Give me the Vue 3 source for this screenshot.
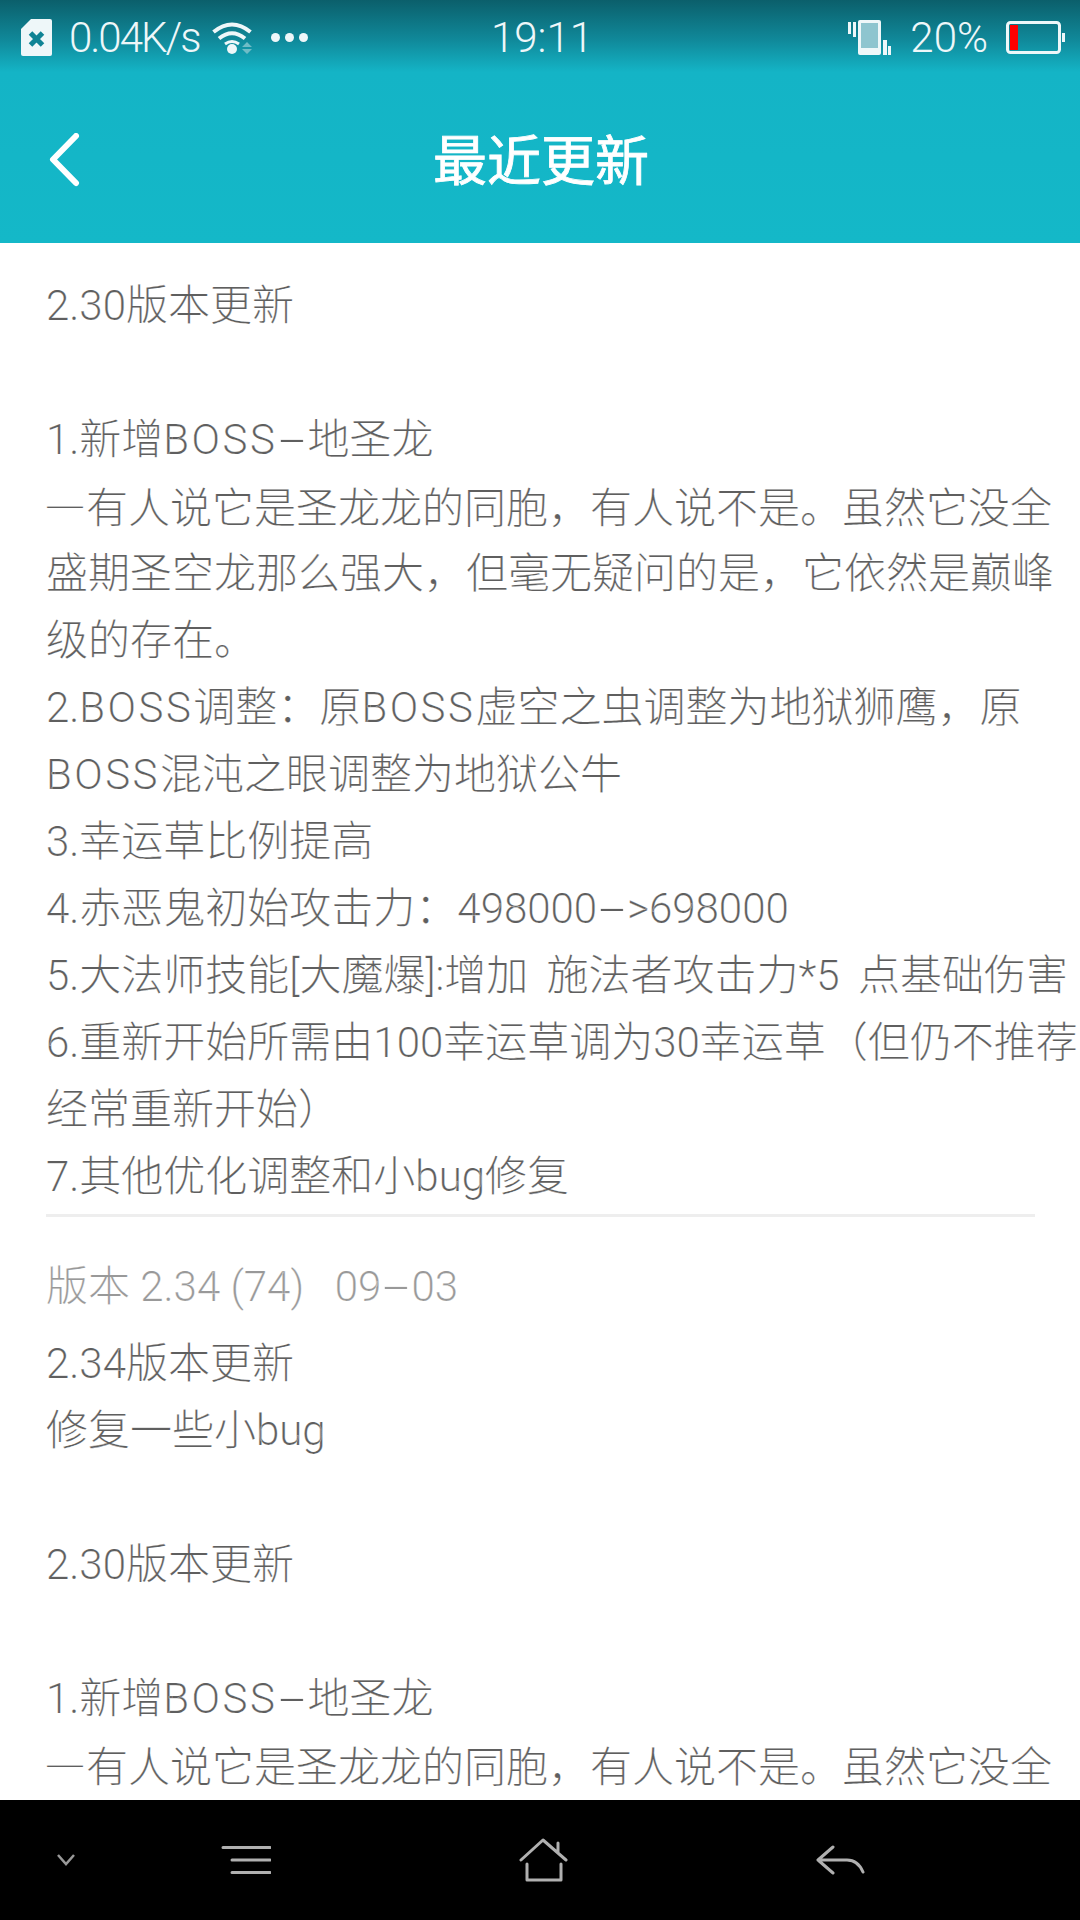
<template>
  <div class="phone">
    <div class="top">
      <!-- status bar -->
      <div class="status">
        <div class="status-left">
          <svg class="sim" width="31" height="37" viewBox="0 0 31 37">
            <path d="M10 0H29a2 2 0 0 1 2 2V35a2 2 0 0 1-2 2H2a2 2 0 0 1-2-2V10Z" fill="#eef7f9" />
            <path d="M9.5 14l12 12M21.5 14l-12 12" stroke="#0f8495" stroke-width="5" fill="none" />
          </svg>
          <span class="speed">0.04K/s</span>
          <svg class="wifi" width="40" height="34" viewBox="0 0 40 34">
            <path d="M1.5 11Q20 -4 38.5 11" stroke="#eef7f9" stroke-width="4" fill="none" />
            <path d="M7 17.5Q20 7 33 17.5" stroke="#eef7f9" stroke-width="4" fill="none" />
            <path d="M13 23Q20 18 27 23" stroke="#eef7f9" stroke-width="3" fill="none" />
            <circle cx="20" cy="28" r="5" fill="#eef7f9" />
            <path d="M35 21l5 5H30ZM30 28H40l-5 5Z" fill="#6fbcc6" />
          </svg>
          <div class="dots"><i></i><i></i><i></i></div>
        </div>
        <div class="clock">19:11</div>
        <div class="status-right">
          <svg class="vibrate" width="43" height="35" viewBox="0 0 43 35">
            <path d="M0 2h3v12H0ZM5 2h3v15H5Z" fill="#eef7f9" />
            <rect x="10" y="0" width="23" height="35" rx="2" fill="#eef7f9" />
            <rect x="13" y="3" width="17" height="25" fill="#8ec5cf" />
            <path d="M35 20h4v15h-4ZM40 26h3v9h-3Z" fill="#eef7f9" />
          </svg>
          <span class="percent">20%</span>
          <svg class="battery" width="60" height="34" viewBox="0 0 60 34">
            <rect x="1.5" y="1.5" width="52" height="30" rx="3" fill="none" stroke="#eef7f9" stroke-width="3" />
            <rect x="4" y="4" width="8" height="25" fill="#ff0000" />
            <rect x="56" y="12" width="3" height="9" fill="#eef7f9" />
          </svg>
        </div>
      </div>
      <!-- title -->
      <div class="title-bar">
        <svg class="back" width="32" height="54" viewBox="0 0 32 54">
          <path d="M27 3L4 26.5 27 50" stroke="#fff" stroke-width="6" stroke-linecap="round" stroke-linejoin="round" fill="none" />
        </svg>
        <div class="title">最近更新</div>
      </div>
    </div>

    <div class="content">
      <div class="block">
        <div v-for="(line, i) in firstLines" :key="i" class="line" :class="{ cjk: line.startsWith('—') }">
          <span v-for="(part, j) in parts(line)" :key="j" :class="partClass(part)">{{ part }}</span>
        </div>
      </div>
      <div class="divider"></div>
      <div class="version">
        <span v-for="(part, j) in parts(versionLine)" :key="j" :class="partClass(part)">{{ part }}</span>
      </div>
      <div class="block second">
        <div v-for="(line, i) in secondLines" :key="i" class="line" :class="{ cjk: line.startsWith('—') }">
          <span v-for="(part, j) in parts(line)" :key="j" :class="partClass(part)">{{ part }}</span>
        </div>
      </div>
    </div>

    <!-- navigation bar -->
    <div class="nav">
      <svg width="24" height="16" viewBox="0 0 24 16">
        <path d="M4 3l8 9 8-9" stroke="#999" stroke-width="2.5" fill="none" />
      </svg>
      <svg width="50" height="30" viewBox="0 0 50 30">
        <path d="M2 2.5H49M11 15H49M11 27.5H49" stroke="#b0b0b0" stroke-width="3" stroke-linecap="round" fill="none" />
      </svg>
      <svg width="50" height="44" viewBox="0 0 50 44">
        <path d="M2 22L24 2l23 20M39 5V14M8 26V42H42V26" stroke="#b0b0b0" stroke-width="3" stroke-linecap="round" stroke-linejoin="round" fill="none" />
      </svg>
      <svg width="50" height="30" viewBox="0 0 50 30">
        <path d="M18 2L3 15l15 13M3 15H32C40 15 45 20 48 27" stroke="#b0b0b0" stroke-width="3" stroke-linecap="round" stroke-linejoin="round" fill="none" />
      </svg>
    </div>
  </div>
</template>

<script setup>
const updateLines = [
  '2.30版本更新',
  '',
  '1.新增BOSS-地圣龙',
  '—有人说它是圣龙龙的同胞，有人说不是。虽然它没全'
]

const firstLines = [
  ...updateLines,
  '盛期圣空龙那么强大，但毫无疑问的是，它依然是巅峰',
  '级的存在。',
  '2.BOSS调整：原BOSS虚空之虫调整为地狱狮鹰，原',
  'BOSS混沌之眼调整为地狱公牛',
  '3.幸运草比例提高',
  '4.赤恶鬼初始攻击力：498000->698000',
  '5.大法师技能[大魔爆]:增加 施法者攻击力*5 点基础伤害',
  '6.重新开始所需由100幸运草调为30幸运草（但仍不推荐',
  '经常重新开始）',
  '7.其他优化调整和小bug修复'
]

const secondLines = ['2.34版本更新', '修复一些小bug', '', ...updateLines]

const versionLine = '版本 2.34 (74)\u00a0\u00a0 09-03'

// capitals and hyphens run wider in the original font
const parts = (line) => line.split(/(BOSS|-)/)
const partClass = (part) => ({ caps: part === 'BOSS', hyphen: part === '-' })
</script>

<style>
html,
body {
  margin: 0;
  background: #fff;
}
</style>

<style scoped>
.phone {
  width: 1080px;
  height: 1920px;
  display: flex;
  flex-direction: column;
  overflow: hidden;
  background: #fff;
  font-family: Roboto, "Noto Sans CJK SC", sans-serif;
}

.top {
  height: 243px;
  flex: none;
  background: linear-gradient(#0b5f6b 0, #10899a 40px, #14b4c6 72px, #14b8c8 243px);
}

.status {
  height: 75px;
  display: flex;
  align-items: center;
  position: relative;
  color: #eef7f9;
  font-weight: 300;
  font-size: 42px;
}

.status-left {
  display: flex;
  align-items: center;
  padding-left: 21px;
}

.speed {
  margin-left: 17px;
  letter-spacing: -2px;
}

.wifi {
  margin-left: 13px;
}

.dots {
  display: flex;
  gap: 5px;
  margin-left: 19px;
}

.dots i {
  width: 9px;
  height: 9px;
  border-radius: 50%;
  background: #eef7f9;
}

.clock {
  position: absolute;
  left: 491px;
}

.status-right {
  display: flex;
  align-items: center;
  margin-left: auto;
  padding-right: 14px;
}

.percent {
  margin-left: 19px;
}

.battery {
  margin-left: 18px;
}

.title-bar {
  height: 168px;
  display: flex;
  align-items: center;
  justify-content: center;
  position: relative;
}

.back {
  position: absolute;
  left: 49px;
  top: 58px;
}

.title {
  color: #fff;
  font-family: "Noto Sans CJK SC", sans-serif;
  font-size: 54px;
  font-weight: 400;
  -webkit-text-stroke: 0.8px #fff;
  margin: -4px 0 0 2px;
}

.content {
  flex: 1;
  overflow: hidden;
  padding: 29px 0 0 46px;
  color: #5f5f5f;
  font-size: 42px;
  font-weight: 300;
  -webkit-text-stroke: 0.2px #fff;
}

.line {
  height: 67px;
  line-height: 67px;
  white-space: nowrap;
  word-spacing: 8px;
}

.caps {
  letter-spacing: 2.5px;
}

.hyphen {
  display: inline-block;
  transform: scaleX(2.3);
  margin: 0 9px;
}

.cjk {
  font-family: "Noto Sans CJK SC", sans-serif;
  font-variant-east-asian: full-width;
  line-height: 63px;
  margin-left: -2px;
}

.divider {
  width: 989px;
  height: 3px;
  margin-top: 4px;
  background: #eee;
}

.version {
  margin-top: 34px;
  height: 72px;
  line-height: 72px;
  color: #999;
}

.second {
  margin-top: 7px;
}

.nav {
  height: 120px;
  flex: none;
  background: #000;
  display: grid;
  grid-template-columns: 132px 228px 368px 224px;
  align-items: center;
  justify-items: center;
}
</style>
